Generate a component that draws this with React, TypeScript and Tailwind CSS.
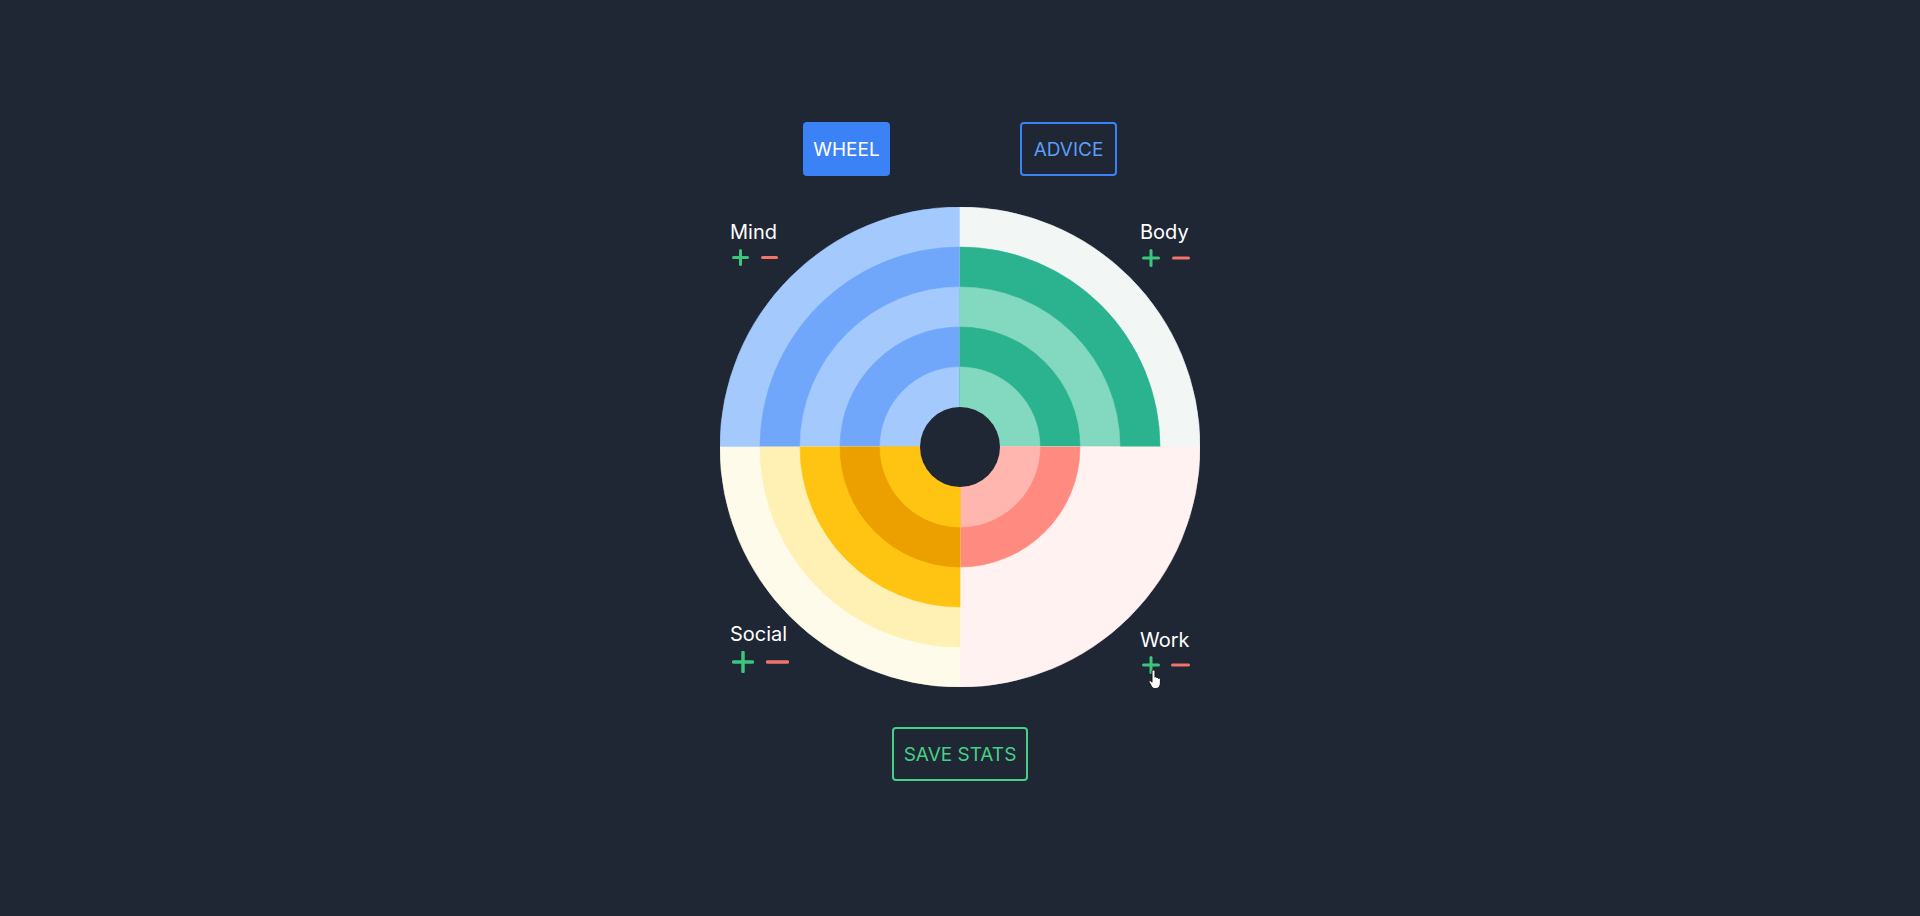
import React from 'react'

const BG = '#1f2634'

type Quadrant = { start: number; colors: string[] }

// rings listed inner -> outer
const quadrants: Quadrant[] = [
  { start: 180, colors: ['#a3c9fd', '#70a7fb', '#a3c9fd', '#70a7fb', '#a3c9fd'] },
  { start: 270, colors: ['#83d9bf', '#2ab38e', '#83d9bf', '#2ab38e', '#f2f7f6'] },
  { start: 0, colors: ['#ffb6ae', '#ff8a80', '#fff2f0', '#fff2f0', '#fff2f0'] },
  { start: 90, colors: ['#ffc412', '#eba000', '#ffc412', '#fef1b3', '#fffbea'] }
]

const sector = (cx: number, cy: number, r: number, a0: number, a1: number) => {
  const rad = (a: number) => (a * Math.PI) / 180
  const x0 = cx + r * Math.cos(rad(a0))
  const y0 = cy + r * Math.sin(rad(a0))
  const x1 = cx + r * Math.cos(rad(a1))
  const y1 = cy + r * Math.sin(rad(a1))
  return `M${cx} ${cy} L${x0} ${y0} A${r} ${r} 0 0 1 ${x1} ${y1} Z`
}

const Wheel = () => (
  <svg width="480" height="480" viewBox="0 0 480 480" className="block">
    {quadrants.map((q) =>
      [4, 3, 2, 1, 0].map((i) => (
        <path
          key={`${q.start}-${i}`}
          d={sector(240, 240, 80 + 40 * i, q.start, q.start + 90)}
          fill={q.colors[i]}
          stroke={q.colors[i]}
          strokeWidth={0.6}
        />
      ))
    )}
    <circle cx="240" cy="240" r="40" fill={BG} />
  </svg>
)

const Plus = ({ size, stroke = 3 }: { size: number; stroke?: number }) => (
  <svg width={size} height={size} viewBox={`0 0 ${size} ${size}`}>
    <line x1={1.5} y1={size / 2} x2={size - 1.5} y2={size / 2} stroke="#3cc57c" strokeWidth={stroke} strokeLinecap="round" />
    <line x1={size / 2} y1={1.5} x2={size / 2} y2={size - 1.5} stroke="#3cc57c" strokeWidth={stroke} strokeLinecap="round" />
  </svg>
)

const Minus = ({ width, height, stroke = 3 }: { width: number; height: number; stroke?: number }) => (
  <svg width={width} height={height} viewBox={`0 0 ${width} ${height}`}>
    <line x1={1.5} y1={height / 2} x2={width - 1.5} y2={height / 2} stroke="#f2736b" strokeWidth={stroke} strokeLinecap="round" />
  </svg>
)

const Cursor = () => (
  <svg width="16" height="21" viewBox="0 0 16 21" className="absolute left-[428px] top-[462px]">
    <path
      d="M5.5 1 C6.3 1 7 1.7 7 2.5 V8.2 C7 7.4 8.8 7.4 8.8 8.2 V9 C8.8 8.3 10.6 8.3 10.6 9 V9.6 C10.6 9 12.4 9 12.4 9.8 V14 C12.4 16.6 11 19.5 8.5 19.5 H6.5 C5 19.5 4.2 18.4 3.4 17.2 L1.2 13.3 C0.8 12.5 1.2 11.8 1.9 11.7 C2.6 11.6 3.2 12.2 4 13.2 V2.5 C4 1.7 4.7 1 5.5 1 Z"
      fill="#ffffff"
      stroke="#111111"
      strokeWidth="1"
      strokeLinejoin="round"
    />
  </svg>
)

const Label = ({
  name,
  className,
  plus,
  minusW,
  stroke,
  gap,
  iconTop
}: {
  name: string
  className: string
  plus: number
  minusW: number
  stroke: number
  gap: string
  iconTop: string
}) => (
  <div className={`absolute flex flex-col ${className}`}>
    <span className="text-[20px] leading-7 text-white">{name}</span>
    <div className={`ml-[2px] flex items-center ${gap} ${iconTop}`}>
      <Plus size={plus} stroke={stroke} />
      <Minus width={minusW} height={plus} stroke={stroke} />
    </div>
  </div>
)

const App = () => {
  return (
    <div
      className="flex h-[916px] w-full flex-col items-center bg-[#1f2634] pt-[122px]"
      style={{ fontFamily: 'Inter, "Noto Sans", sans-serif' }}
    >
      <div className="flex gap-[130px]">
        <button className="flex h-[54px] w-[87px] items-center justify-center rounded bg-[#3b82f6] pt-[2px] text-[19px] text-white">
          WHEEL
        </button>
        <button className="flex h-[54px] w-[97px] items-center justify-center rounded border-2 border-[#3b82f6] pt-[2px] text-[19px] text-[#5b9df7]">
          ADVICE
        </button>
      </div>

      <div className="relative mt-[31px] h-[480px] w-[480px]">
        <Wheel />
        <Label name="Mind" className="left-[10px] top-[11px]" plus={17} minusW={17} stroke={3} gap="gap-[12px]" iconTop="mt-[3px]" />
        <Label name="Body" className="left-[420px] top-[11px]" plus={18} minusW={18} stroke={3} gap="gap-[12px]" iconTop="mt-[3px]" />
        <Label name="Social" className="left-[10px] top-[413px]" plus={22} minusW={23} stroke={3.5} gap="gap-[12px]" iconTop="mt-[3px]" />
        <Label name="Work" className="left-[420px] top-[419px]" plus={18} minusW={19} stroke={3} gap="gap-[11px]" iconTop="mt-[2px]" />
        <Cursor />
      </div>

      <button className="mt-[40px] flex h-[54px] w-[136px] items-center justify-center rounded border-2 border-[#48cf86] pt-[2px] text-[19px] text-[#48cf86]">
        SAVE STATS
      </button>
    </div>
  )
}

export default App
